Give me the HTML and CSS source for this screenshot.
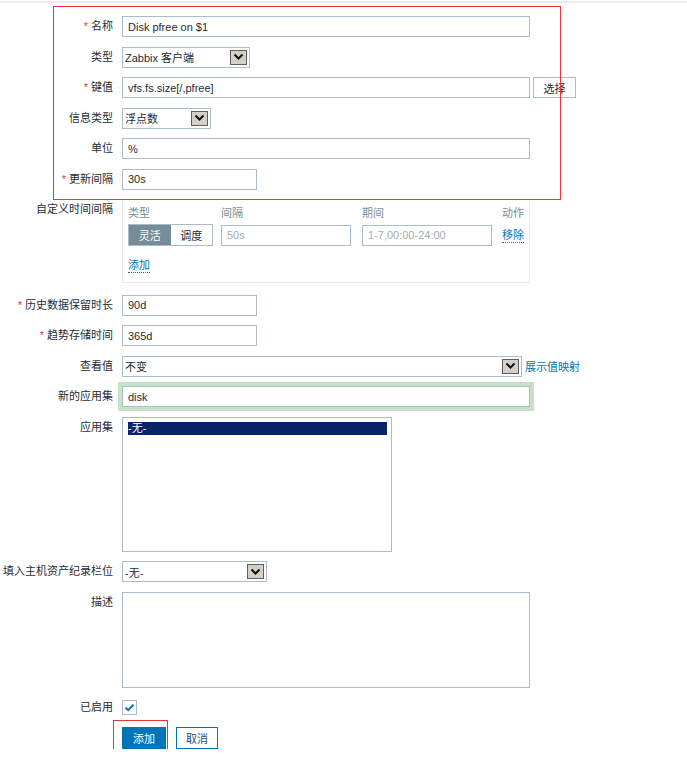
FILE: index.html
```html
<!DOCTYPE html>
<html lang="zh-CN">
<head>
<meta charset="utf-8">
<title>监控项</title>
<link rel="stylesheet" href="styles.css">
</head>
<body>
<div class="topline"></div>
<div class="page">
  <form class="form">
    <div class="row">
      <label class="lbl"><span class="req">*</span> 名称</label>
      <div class="ctl"><input class="inp w408" value="Disk pfree on $1"></div>
    </div>
    <div class="row">
      <label class="lbl">类型</label>
      <div class="ctl">
        <div class="select w128"><span class="sel-text">Zabbix 客户端</span><span class="sel-arrow"><svg width="11" height="8" viewBox="0 0 11 8"><polyline points="1.5,1.5 5.5,5.5 9.5,1.5" fill="none" stroke="#111" stroke-width="2"/></svg></span></div>
      </div>
    </div>
    <div class="row">
      <label class="lbl"><span class="req">*</span> 键值</label>
      <div class="ctl"><input class="inp w408" value="vfs.fs.size[/,pfree]"><button type="button" class="btn-grey">选择</button></div>
    </div>
    <div class="row">
      <label class="lbl">信息类型</label>
      <div class="ctl">
        <div class="select w89"><span class="sel-text">浮点数</span><span class="sel-arrow"><svg width="11" height="8" viewBox="0 0 11 8"><polyline points="1.5,1.5 5.5,5.5 9.5,1.5" fill="none" stroke="#111" stroke-width="2"/></svg></span></div>
      </div>
    </div>
    <div class="row">
      <label class="lbl">单位</label>
      <div class="ctl"><input class="inp w408" value="%"></div>
    </div>
    <div class="row">
      <label class="lbl"><span class="req">*</span> 更新间隔</label>
      <div class="ctl"><input class="inp w135" value="30s"></div>
    </div>
    <div class="row row-box">
      <label class="lbl">自定义时间间隔</label>
      <div class="ctl">
        <div class="intervals">
          <div class="iv-grid">
            <span class="iv-head">类型</span>
            <span class="iv-head">间隔</span>
            <span class="iv-head">期间</span>
            <span class="iv-head">动作</span>
            <div class="seg"><span class="seg-on">灵活</span><span class="seg-off">调度</span></div>
            <input class="inp w130 ph" value="50s">
            <input class="inp w130 ph" value="1-7,00:00-24:00">
            <a class="link" href="#">移除</a>
          </div>
          <a class="link add" href="#">添加</a>
        </div>
      </div>
    </div>
    <div class="row">
      <label class="lbl"><span class="req">*</span> 历史数据保留时长</label>
      <div class="ctl"><input class="inp w135" value="90d"></div>
    </div>
    <div class="row">
      <label class="lbl"><span class="req">*</span> 趋势存储时间</label>
      <div class="ctl"><input class="inp w135" value="365d"></div>
    </div>
    <div class="row">
      <label class="lbl">查看值</label>
      <div class="ctl">
        <div class="select w400"><span class="sel-text">不变</span><span class="sel-arrow"><svg width="11" height="8" viewBox="0 0 11 8"><polyline points="1.5,1.5 5.5,5.5 9.5,1.5" fill="none" stroke="#111" stroke-width="2"/></svg></span></div>
        <a class="plain-link" href="#">展示值映射</a>
      </div>
    </div>
    <div class="row">
      <label class="lbl">新的应用集</label>
      <div class="ctl"><input class="inp w408 focus" value="disk"></div>
    </div>
    <div class="row">
      <label class="lbl">应用集</label>
      <div class="ctl">
        <div class="listbox"><div class="opt-sel">-无-</div></div>
      </div>
    </div>
    <div class="row">
      <label class="lbl">填入主机资产纪录栏位</label>
      <div class="ctl">
        <div class="select w145"><span class="sel-text">-无-</span><span class="sel-arrow"><svg width="11" height="8" viewBox="0 0 11 8"><polyline points="1.5,1.5 5.5,5.5 9.5,1.5" fill="none" stroke="#111" stroke-width="2"/></svg></span></div>
      </div>
    </div>
    <div class="row">
      <label class="lbl">描述</label>
      <div class="ctl"><textarea class="area"></textarea></div>
    </div>
    <div class="row row-check">
      <label class="lbl">已启用</label>
      <div class="ctl">
        <span class="check"><svg width="13" height="13" viewBox="0 0 13 13"><polyline points="2.5,6.5 5.2,9.2 10.5,3.8" fill="none" stroke="#0275b8" stroke-width="2"/></svg></span>
      </div>
    </div>
    <div class="row">
      <span></span>
      <div class="ctl buttons">
        <button type="button" class="btn-primary">添加</button>
        <button type="button" class="btn-alt">取消</button>
      </div>
    </div>
  </form>
  <div class="mark mark-top"></div>
  <div class="mark mark-btn"></div>
</div>
</body>
</html>
```
FILE: styles.css
```css
* { box-sizing: border-box; }
html, body { margin: 0; padding: 0; background: #fff; }
body {
  font-family: "Liberation Sans", "Noto Sans CJK SC", sans-serif;
  font-size: 11px;
  color: #1f2c33;
}
.topline { height: 2px; margin-top: 1px; background: #ececec; }
.page { position: relative; }
.form {
  display: flex;
  flex-direction: column;
  gap: 9.5px;
  padding-top: 13px;
}
.row {
  display: grid;
  grid-template-columns: 113px 1fr;
  column-gap: 9px;
  align-items: start;
}
.row-box { margin-bottom: 2px; }
.lbl {
  text-align: right;
  line-height: 21px;
  white-space: nowrap;
}
.req { color: #e33734; }
.ctl {
  display: flex;
  align-items: center;
  gap: 3px;
  min-height: 21px;
}
.inp {
  height: 21px;
  border: 1px solid #acbbc7;
  padding: 0 5px;
  font: inherit;
  color: #1f2c33;
  background: #fff;
  outline: none;
  margin: 0;
}
.inp.ph { color: #a3acb2; }
.inp.focus { box-shadow: 0 0 0 4px #c6e3c8; border-radius: 0; }
.w408 { width: 408px; }
.w400 { width: 400px; }
.w135 { width: 135px; }
.w130 { width: 130px; }
.w128 { width: 128px; }
.w145 { width: 145px; }
.w89 { width: 89px; }

.select {
  height: 21px;
  border: 1px solid #acbbc7;
  background: #fff;
  display: flex;
  align-items: center;
  justify-content: space-between;
  padding: 0 2px 0 2px;
}
.sel-text { white-space: nowrap; }
.sel-arrow {
  width: 17px;
  height: 15px;
  background: #d4d0c8;
  border: 1px solid #5e5e5e;
  display: flex;
  align-items: center;
  justify-content: center;
}

.btn-grey {
  height: 21px;
  width: 43px;
  border: 1px solid #acbbc7;
  background: #fff;
  color: #1f2c33;
  font: inherit;
  padding: 0;
  margin: 0;
}

.intervals {
  width: 408px;
  height: 84px;
  border: 1px solid #ebebeb;
  padding: 5px 5px 0 5px;
}
.iv-grid {
  display: grid;
  grid-template-columns: 93px 141px 140px auto;
  row-gap: 3px;
  align-items: center;
}
.iv-head { color: #768d99; line-height: 16px; }
.seg {
  display: flex;
  width: 85px;
  height: 22px;
  border: 1px solid #acbbc7;
}
.seg span {
  flex: 1;
  display: flex;
  align-items: center;
  justify-content: center;
}
.seg-on { background: #768d99; color: #fff; }
.seg-off { background: #fff; color: #1f2c33; }
.link {
  color: #0275b8;
  text-decoration: none;
  border-bottom: 1px dotted #0275b8;
  line-height: 14px;
  justify-self: start;
}
.add {
  display: inline-block;
  margin-top: 12px;
}
.plain-link {
  color: #0275b8;
  text-decoration: none;
  white-space: nowrap;
}

.listbox {
  width: 270px;
  height: 135px;
  border: 1px solid #acbbc7;
  padding: 4px 4px 0 5px;
}
.opt-sel {
  background: #0a246a;
  color: #fff;
  height: 13px;
  line-height: 13px;
}

.area {
  width: 408px;
  height: 96px;
  border: 1px solid #acbbc7;
  resize: none;
  margin: 0;
  font: inherit;
  display: block;
}

.row-check .ctl { min-height: 20px; height: 20px; }
.row-check .lbl { line-height: 20px; }
.check {
  width: 15px;
  height: 15px;
  border: 1px solid #acbbc7;
  display: flex;
  align-items: center;
  justify-content: center;
  background: #fff;
}

.buttons { gap: 10px; }
.btn-primary {
  width: 44px;
  height: 22px;
  background: #0275b8;
  border: 1px solid #0275b8;
  color: #fff;
  font: inherit;
  padding: 0;
  margin: 0;
}
.btn-alt {
  width: 42px;
  height: 22px;
  background: #fff;
  border: 1px solid #0275b8;
  color: #1d4f78;
  font: inherit;
  padding: 0;
  margin: 0;
}

.mark {
  position: absolute;
  border: 1px solid #ec3438;
  pointer-events: none;
}
.mark-top { left: 53px; top: 3px; width: 508px; height: 194px; }
.mark-btn { left: 113px; top: 717px; width: 55px; height: 37px; }
```
